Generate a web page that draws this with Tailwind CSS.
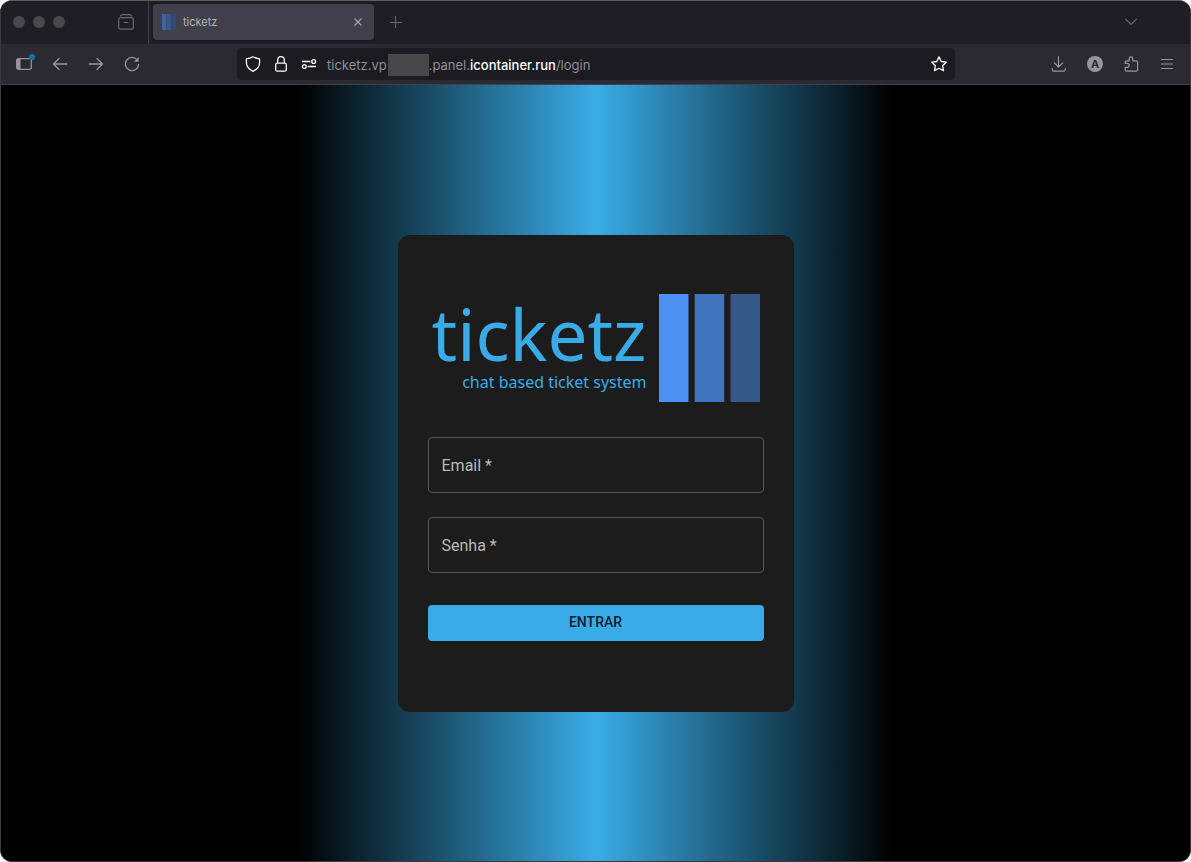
<!DOCTYPE html>
<html lang="pt-BR">
<head>
  <meta charset="utf-8" />
  <meta name="viewport" content="width=device-width, initial-scale=1" />
  <title>ticketz</title>
  <script src="https://cdn.jsdelivr.net/npm/@tailwindcss/browser@4"></script>
</head>
<body class="bg-white">
  <div class="flex min-h-screen flex-col overflow-hidden rounded-xl border border-[#3a3a3c] border-t-[#5c5c60] bg-black">

    <!-- Tab strip -->
    <header class="flex h-[43px] items-center bg-[#1f1e25] pb-px font-[Inter,sans-serif]">
      <div class="flex gap-2 pl-3">
        <span class="size-3 rounded-full bg-[#4a494e]"></span>
        <span class="size-3 rounded-full bg-[#4a494e]"></span>
        <span class="size-3 rounded-full bg-[#4a494e]"></span>
      </div>
      <button type="button" aria-label="View" class="ml-[53px] size-4 text-[#68676d]">
        <svg class="size-4" viewBox="0 0 16 16" fill="none" stroke="currentColor" stroke-width="1.2" stroke-linecap="round">
          <path d="M2.600 2C2.900 1 3.600 0.700 4.500 0.700h7c.9 0 1.600.3 1.900 1.300" />
          <rect x="0.700" y="3.700" width="14.600" height="11.500" rx="2" />
          <path d="M6.200 8.500h3.600" />
        </svg>
      </button>
      <div class="ml-[14px] h-[43px] w-px bg-[#424148]"></div>
      <div class="ml-1 flex h-9 w-[221px] items-center rounded bg-[#413f49] pr-2 pl-[9px] shadow">
        <svg class="h-4 w-[14px]" viewBox="0 0 14 16">
          <rect width="4.300" height="16" fill="#3b64ad" />
          <rect x="4.900" width="4.300" height="16" fill="#38568d" />
          <rect x="9.800" width="4.200" height="16" fill="#354a72" />
        </svg>
        <span class="ml-[7px] flex-1 text-[11px] leading-4 text-[#b4b3b8]">ticketz</span>
        <button type="button" aria-label="Close tab" class="flex size-4 items-center justify-center text-[#a3a2a8]">
          <svg class="size-2" viewBox="0 0 8 8" fill="none" stroke="currentColor" stroke-width="1.300"><path d="M0.500 0.500l7 7M7.500 0.500l-7 7" /></svg>
        </button>
      </div>
      <button type="button" aria-label="New tab" class="ml-4 size-3 text-[#6b6a70]">
        <svg class="size-3" viewBox="0 0 12 12" fill="none" stroke="currentColor"><path d="M5.500 0v12M0 6.500h12" /></svg>
      </button>
      <button type="button" aria-label="List all tabs" class="mr-[53px] ml-auto text-[#6b6a70]">
        <svg class="h-2 w-3" viewBox="0 0 12 8" fill="none" stroke="currentColor" stroke-width="1.100"><path d="M0.500 1L6 6.500 11.500 1" /></svg>
      </button>
    </header>

    <!-- Toolbar -->
    <nav class="flex h-[41px] items-center border-b border-[#43424a] bg-[#2b2a33] px-[5px] font-[Inter,sans-serif] text-[#97969c]">
      <button type="button" aria-label="Sidebar" class="flex w-9 justify-center">
        <svg class="h-5 w-5 overflow-visible" viewBox="0 0 20 20" fill="none">
          <rect x="2.700" y="4.700" width="14.600" height="10.600" rx="1.500" stroke="currentColor" stroke-width="1.300" />
          <path d="M3 5h3.500v10H3z" fill="currentColor" />
          <circle cx="18" cy="3.200" r="3.100" fill="#13749c" />
        </svg>
      </button>
      <button type="button" aria-label="Back" class="flex w-9 justify-center">
        <svg class="size-4" viewBox="0 0 16 16" fill="none" stroke="currentColor" stroke-width="1.300" stroke-linecap="round" stroke-linejoin="round"><path d="M14.800 8H1.500M7 2.500L1.500 8 7 13.500" /></svg>
      </button>
      <button type="button" aria-label="Forward" class="flex w-9 justify-center">
        <svg class="size-4" viewBox="0 0 16 16" fill="none" stroke="currentColor" stroke-width="1.300" stroke-linecap="round" stroke-linejoin="round"><path d="M1.200 8h13.300M9 2.500L14.500 8 9 13.500" /></svg>
      </button>
      <button type="button" aria-label="Reload" class="flex w-9 justify-center">
        <svg class="size-4" viewBox="0 0 16 16" fill="none" stroke="currentColor" stroke-width="1.300" stroke-linecap="round">
          <path d="M13 3.700A6.600 6.600 0 1 0 14.600 8.500" />
          <path d="M14.700 1v4.700h-4.700z" fill="currentColor" stroke="none" />
        </svg>
      </button>

      <div class="mr-[86px] ml-[87px] flex h-8 flex-1 items-center rounded bg-[#1c1b22] px-2 text-[#fbfbfe]">
        <svg class="size-4" viewBox="0 0 16 16" fill="none" stroke="currentColor" stroke-width="1.300" stroke-linejoin="round"><path d="M8 0.800c2 1.200 4.200 1.900 6.600 2.100v3.400c0 4-2.400 7-6.600 9-4.200-2-6.600-5-6.600-9V2.900C3.800 2.700 6 2 8 0.800z" /></svg>
        <svg class="ml-3 size-4" viewBox="0 0 16 16" fill="none" stroke="currentColor" stroke-width="1.300">
          <rect x="2.700" y="7.200" width="10.600" height="8" rx="1.500" />
          <path d="M4.700 7V4a3.300 3.300 0 0 1 6.600 0v3" />
        </svg>
        <svg class="ml-3 size-4" viewBox="0 0 16 16" fill="none" stroke="currentColor" stroke-width="1.300" stroke-linecap="round">
          <path d="M1.500 5.500h7.500M7 10.500h7.500" />
          <circle cx="12.700" cy="5.500" r="1.900" />
          <circle cx="3.300" cy="10.500" r="1.900" />
        </svg>
        <div class="ml-[10px] flex flex-1 items-center pt-px text-[13px] leading-5 text-[#8f8e94]">
          <span>ticketz.vp</span>
          <span class="ml-px h-[22px] w-[41px] bg-[#48484b]"></span>
          <span>.panel.<span class="font-medium text-[#fbfbfe]">icontainer.run</span>/login</span>
        </div>
        <button type="button" aria-label="Bookmark">
          <svg class="size-4" viewBox="0 0 16 16" fill="none" stroke="currentColor" stroke-width="1.300" stroke-linejoin="round"><path d="M8 0.900l2.200 4.600 5 .7-3.600 3.500.9 5L8 12.300l-4.500 2.400.9-5L0.800 6.200l5-.7z" /></svg>
        </button>
      </div>

      <button type="button" aria-label="Downloads" class="flex w-9 justify-center">
        <svg class="size-4" viewBox="0 0 16 16" fill="none" stroke="currentColor" stroke-width="1.200" stroke-linecap="round" stroke-linejoin="round">
          <path d="M7.500 0.800v10M3.300 6.800L7.500 11l4.200-4.200" />
          <path d="M1.200 12.500v1c0 1 .6 1.600 1.600 1.600h9.800c1 0 1.600-.6 1.600-1.600v-1" />
        </svg>
      </button>
      <button type="button" aria-label="Account" class="flex w-9 justify-center">
        <span class="size-4 rounded-full bg-[#97969c] text-center text-[11px] leading-4 font-bold text-[#2b2a33]">A</span>
      </button>
      <button type="button" aria-label="Extensions" class="flex w-9 justify-center">
        <svg class="size-4" viewBox="0 0 16 16" fill="none" stroke="currentColor" stroke-width="1.200" stroke-linejoin="round"><path d="M2.200 7.300V6.200c0-.9.500-1.400 1.400-1.400h2.600V2.700a1.800 1.800 0 0 1 3.600 0v2.100h3.400c.9 0 1.400.5 1.400 1.400v7.600c0 .9-.5 1.400-1.400 1.400H3.600c-.9 0-1.400-.5-1.400-1.400v-2.500h2a1.900 1.900 0 0 0 0-4z" /></svg>
      </button>
      <button type="button" aria-label="Menu" class="flex w-9 justify-center">
        <svg class="h-4 w-3" viewBox="0 0 12 16" fill="none" stroke="currentColor" stroke-width="1.200"><path d="M0 3.500h12M0 8h12M0 12.500h12" /></svg>
      </button>
    </nav>

    <!-- Login page -->
    <main class="flex flex-1 items-center justify-center bg-[linear-gradient(to_right,black_25%,#39ace7_50%,black_75%)] font-[Roboto,sans-serif]">
      <form class="w-full max-w-[396px] rounded-xl bg-[#1c1c1c] px-[30px] pt-[59px] pb-[71px]">
        <div class="flex justify-center gap-3">
          <div class="flex flex-col items-end pt-1 font-['Noto_Sans',sans-serif] text-[#39ace7]">
            <span class="text-[71px] leading-[72px]">ticketz</span>
            <span class="text-base leading-6">chat based ticket system</span>
          </div>
          <svg class="h-[108px] w-[101px]" viewBox="0 0 101 108">
            <rect width="29.500" height="108" fill="#4b91f1" />
            <rect x="35.700" width="29.500" height="108" fill="#4174bd" />
            <rect x="71.500" width="29.500" height="108" fill="#355886" />
          </svg>
        </div>

        <div class="relative mt-[35px]">
          <label for="email" class="pointer-events-none absolute top-[17px] left-[14px] text-base leading-6 text-[#b9b9b9]">Email *</label>
          <input id="email" type="email" required class="block h-14 w-full rounded border border-[#555555] bg-transparent px-[14px] text-base text-white outline-none" />
        </div>
        <div class="relative mt-6">
          <label for="password" class="pointer-events-none absolute top-[17px] left-[14px] text-base leading-6 text-[#b9b9b9]">Senha *</label>
          <input id="password" type="password" required class="block h-14 w-full rounded border border-[#555555] bg-transparent px-[14px] text-base text-white outline-none" />
        </div>
        <button type="submit" class="mt-8 block h-9 w-full rounded bg-[#39ace7] pb-[2px] text-sm font-medium text-[#0b222e]">ENTRAR</button>
      </form>
    </main>
  </div>
</body>
</html>
